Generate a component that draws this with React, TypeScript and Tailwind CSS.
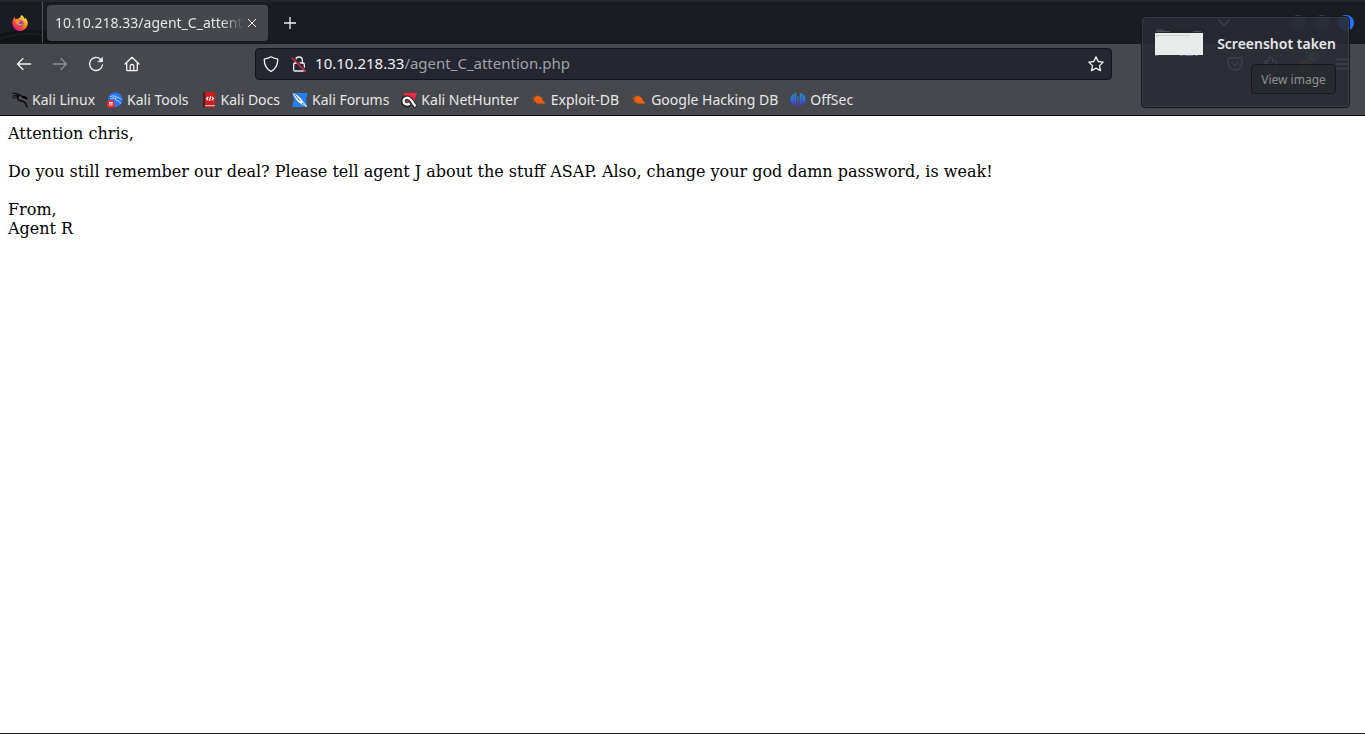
import type { ReactNode } from "react";

type IconProps = { className?: string };

function FirefoxIcon() {
  return (
    <svg viewBox="0 0 16 16" className="size-4" aria-hidden="true">
      <defs>
        <linearGradient id="fx-body" x1="0.85" y1="0.1" x2="0.2" y2="0.95">
          <stop offset="0" stopColor="#fff44f" />
          <stop offset="0.35" stopColor="#ff980e" />
          <stop offset="0.65" stopColor="#ff4a41" />
          <stop offset="1" stopColor="#e31587" />
        </linearGradient>
        <linearGradient id="fx-globe" x1="0.5" y1="0" x2="0.4" y2="1">
          <stop offset="0" stopColor="#b833e1" />
          <stop offset="1" stopColor="#5b4bd0" />
        </linearGradient>
      </defs>
      <path
        d="M9.6 0c1.8 1.3 2.6 2.7 2.9 3.9.4-.1.6-.6.6-1.1 1.8 1.5 2.7 3.5 2.7 5.6A7.7 7.7 0 0 1 8 16 7.7 7.7 0 0 1 .3 8.3C.3 6.5.9 5 1.5 4c.1-.8.4-1.5 1-2.2 0 .9.3 1.6.8 2.1.8-.2 1.500-.1 2.200.2.700-.8 1.500-1.100 2.300-1.200C8.300 1.900 8.900.8 9.600 0z"
        fill="url(#fx-body)"
      />
      <circle cx="8.2" cy="8.4" r="3.2" fill="url(#fx-globe)" />
      <path
        d="M3.4 5.2c1.2-.5 2.4-.3 3.4.6l1.700.1c.2.700-1.400 1.100-1.700 1.700-.1 1.200.9 1.800 2.100 1.500.9-.2 1.300-.5 2-.1-.6 1.300-1.800 1.900-3.200 1.700C5.300 10.400 4.100 8.300 3.400 5.200z"
        fill="#ff9a1f"
      />
    </svg>
  );
}

function Stroke({ className = "size-4", children }: { className?: string; children: ReactNode }) {
  return (
    <svg
      viewBox="0 0 16 16"
      className={className}
      fill="none"
      stroke="currentColor"
      strokeWidth="1.3"
      strokeLinecap="round"
      strokeLinejoin="round"
      aria-hidden="true"
    >
      {children}
    </svg>
  );
}

const BackIcon = () => (
  <Stroke>
    <path d="M14.7 8H1.500M7 2.500 1.500 8 7 13.500" />
  </Stroke>
);
const ForwardIcon = () => (
  <Stroke>
    <path d="M1.300 8h13.200M9 2.500 14.500 8 9 13.500" />
  </Stroke>
);
const ReloadIcon = () => (
  <Stroke>
    <path d="M14.500 9A6.500 6.500 0 1 1 12.700 3.400L14 5" />
    <path d="M14.500 1.500v4.300h-4.300z" fill="currentColor" strokeWidth="0.6" />
  </Stroke>
);
const HomeIcon = () => (
  <Stroke>
    <path d="M1 8 8 1.200 15 8M2.700 6.800v7.100c0 .4.300.7.700.7h9.200c.4 0 .7-.3.700-.7V6.800" />
    <path d="M6.200 14.500v-4.200a1.800 1.800 0 0 1 3.600 0v4.200" />
  </Stroke>
);
const ShieldIcon = () => (
  <Stroke>
    <path d="M8 .8c1.900 1.100 4 1.800 6.200 2.100.4.100.6.400.6.700-.1 4.300-1.700 9.100-6.300 11.500-.3.200-.7.200-1 0C2.900 12.700 1.300 7.900 1.200 3.600c0-.3.200-.6.600-.7C4 2.600 6.100 1.900 8 .8z" />
  </Stroke>
);
const LockIcon = () => (
  <Stroke>
    <path d="M4.600 7V4.400a3.400 3.400 0 0 1 6.800 0V7" />
    <path d="M3.900 7h8.200c.7 0 1.200.5 1.200 1.200v5.600c0 .7-.5 1.200-1.200 1.200H3.900c-.7 0-1.200-.5-1.200-1.200V8.200C2.700 7.500 3.200 7 3.900 7z" />
    <path d="M2.500 1.700 15.500 14.700" stroke="#242731" strokeWidth="1.5" />
    <path d="M1.500 2.500 14.500 15.500" stroke="#e2234a" strokeWidth="1.5" />
  </Stroke>
);
const StarIcon = () => (
  <Stroke>
    <path d="m8 .9 2.200 4.600 5 .6-3.700 3.500 1 5L8 12.100l-4.500 2.500 1-5L.8 6.100l5-.6z" />
  </Stroke>
);
const PocketIcon = () => (
  <Stroke>
    <path d="M2.200 2h11.600c.8 0 1.200.5 1.200 1.200V7A7 7 0 0 1 1 7V3.200C1 2.500 1.400 2 2.200 2z" />
    <path d="M4.800 6.300 8 9.300l3.200-3" />
  </Stroke>
);
const PuzzleIcon = () => (
  <Stroke>
    <path d="M2 14.800V10.500h1.500a1.700 1.700 0 0 0 0-3.400H2V5h3.500V3.300a2 2 0 0 1 4 0V5h4v9.800z" />
  </Stroke>
);
const MenuIcon = () => (
  <Stroke>
    <path d="M1.500 3.500h13M1.500 8h13M1.500 12.500h13" />
  </Stroke>
);

function KaliLinuxIcon({ className = "size-4 text-black" }: IconProps) {
  return (
    <svg viewBox="0 0 16 16" className={className} fill="none" stroke="currentColor" strokeLinecap="round" aria-hidden="true">
      <path d="M.7 1.300C3.500 1 7 1.900 9.700 4.200c1.800-.1 3.600.5 5 1.900" strokeWidth="1.1" />
      <path d="M.6 4.300c1.800-1 4-1.200 6.300-.5M1.500 6.300C3 5.200 4.800 4.700 6.300 4.800" strokeWidth="0.9" />
      <path d="M6.300 3.600C5 5.300 5.200 8.200 8 8.700c2.700.4 5 1 5.700 3 .3 1 .6 2.100 1.300 3" strokeWidth="1.3" />
      <path d="M9.700 4.200c1 1.800 3.400.9 5.200 2.700" strokeWidth="1.2" />
    </svg>
  );
}

const KaliToolsIcon = () => (
  <svg viewBox="0 0 16 16" className="size-4" aria-hidden="true">
    <circle cx="8.300" cy="7.700" r="7.200" fill="#2777ff" />
    <path
      d="M3.500 4.500c3-1.300 5.700-.4 7.500 1.300 1.300 0 2.300.5 3 1.500M3.800 6.700c1.700-.8 3.200-.9 4.700-.4M8.500 6c-.3 1.800.8 2.600 2.300 2.900 1.500.4 2.200 1.300 2.500 2.400"
      fill="none"
      stroke="#dceaff"
      strokeWidth="0.8"
      strokeLinecap="round"
    />
    <circle cx="3.900" cy="11.900" r="3.900" fill="#ee2b2b" />
    <path d="M1.900 10.700h4M2.900 10.700v3M4.900 10.700v3" stroke="#fff" strokeWidth="0.9" />
  </svg>
);

const KaliDocsIcon = () => (
  <svg viewBox="0 0 16 16" className="size-4" aria-hidden="true">
    <path d="M2 1.500C2 .7 2.500.3 3.200.3H14v13H2z" fill="#d9171b" />
    <path d="M2 1.500C2 .7 2.500.3 3.200.3h1v15.200H2z" fill="#3c232b" />
    <path d="M4 13.300h10v1.200H4z" fill="#eee4e4" />
    <path d="M3.300 14.500H14v1H3.300z" fill="#b80f15" />
    <path d="M7.200 4.900 5.500 6.600l1.700 1.700M10.900 4.900l1.700 1.700-1.700 1.700M9.600 4.200 8.500 9" fill="none" stroke="#fff" strokeWidth="1.2" />
  </svg>
);

const KaliForumsIcon = () => (
  <svg viewBox="0 0 16 16" className="size-4" aria-hidden="true">
    <path d="M.3 1H15.700L13.900 8l1.300 7H.3l1.500-7z" fill="#2381f6" />
    <path d="M.8 1.200C3.500 2 7 4 9.500 7.200l2.300 3.300 3.900 4.800-5.200-2.500-3.300-2C4.500 8.500 2.500 5.500.8 1.200z" fill="#f3f5f6" />
    <path d="M2.500 2.500 8 8.700M10 11l2.500 1.800" fill="none" stroke="#34404c" strokeWidth="0.900" />
  </svg>
);

const NetHunterIcon = () => (
  <svg viewBox="0 0 16 16" className="size-4" aria-hidden="true">
    <path d="M2 1H15.800L13.500 8.500l1.200 4.500L8 8z" fill="#f0283f" />
    <g fill="none" strokeLinecap="butt">
      <path d="M15 15.300 12 10.500C9.500 6.600 6.800 4.700 4.200 6c-3 1.500-2.600 6 .9 6.900 1.400.3 3-.1 4-1.100" stroke="#17191b" strokeWidth="4.200" />
      <path d="M14.500 14.500 11.500 10C9.200 6.500 6.600 5 4.300 6.300c-2.600 1.400-2.200 5.300 1 6.100 1.200.3 2.500-.1 3.400-.9" stroke="#fafafa" strokeWidth="2.400" />
      <path d="M4.500 9.600c1 .6 2.200.5 3-.1" stroke="#d92439" strokeWidth="1.600" />
    </g>
  </svg>
);

const ExploitIcon = () => (
  <svg viewBox="0 0 16 16" className="size-4" aria-hidden="true">
    <path
      d="M2.800 6.500C3.900 4.300 6 3.300 8 4.300c2 .4 3.300 2.300 4 4.200.6 1.200 1.500 1.800 2.700 2.400-1.300.5-2.500.7-3.700.5-2.500.6-5 .2-6.500-1.400C3.300 9 2.700 7.700 2.800 6.500z"
      fill="#f0600f"
    />
    <path
      d="M4.500 5.500 2.300 3.500M3.500 7.200.9 6.500M4.300 9.300 2 10.200M7.300 4.500 6.500 2.800M6.500 10.700l-.8 1.600M9 11l.5 1.300"
      stroke="#b9521e"
      strokeWidth="0.8"
      strokeLinecap="round"
    />
  </svg>
);

const OffSecIcon = () => (
  <svg viewBox="0 0 16 16" className="size-4" aria-hidden="true">
    <defs>
      <linearGradient id="offsec" x1="0" y1="0" x2="0" y2="1">
        <stop offset="0" stopColor="#12a0d2" />
        <stop offset="0.5" stopColor="#3869df" />
        <stop offset="1" stopColor="#5b1fd8" />
      </linearGradient>
    </defs>
    <path
      d="M7.500 4h1v11.500h-1zM6.200.8v13l-1.800-.8V1.400zM3.700 1.800v10.700C1.600 11.500.5 9.500.5 7.200s1.200-4.300 3.200-5.400zM9.800.8v13l1.800-.8V1.400zM12.300 1.800v10.700c2.100-1 3.200-3 3.200-5.300s-1.200-4.300-3.200-5.400z"
      fill="url(#offsec)"
    />
  </svg>
);

const bookmarks = [
  { label: "Kali Linux", Icon: KaliLinuxIcon },
  { label: "Kali Tools", Icon: KaliToolsIcon },
  { label: "Kali Docs", Icon: KaliDocsIcon },
  { label: "Kali Forums", Icon: KaliForumsIcon },
  { label: "Kali NetHunter", Icon: NetHunterIcon },
  { label: "Exploit-DB", Icon: ExploitIcon },
  { label: "Google Hacking DB", Icon: ExploitIcon },
  { label: "OffSec", Icon: OffSecIcon },
];

function TabStrip() {
  return (
    <header className="relative flex h-11 items-center overflow-hidden border-t-2 border-b border-t-[#23272e] border-b-[#15181c] bg-[#191c21]">
      <svg
        viewBox="0 0 150 44"
        className="pointer-events-none absolute bottom-0 left-0 h-11 w-[150px]"
        fill="none"
        aria-hidden="true"
      >
        <path d="M0 35C20 29 38 31 60 35S110 40 128 45H0z" fill="#111316" />
        <path d="M0 40C15 34 30 34 43 36" stroke="#22252a" />
      </svg>
      <div className="relative flex h-full w-[43px] shrink-0 items-center justify-center border-r border-[#50545a] pr-0.5">
        <FirefoxIcon />
      </div>
      <div className="relative ml-1 flex h-9 w-[221px] shrink-0 items-center rounded bg-[#45474c] px-2">
        <span className="min-w-0 flex-1 overflow-hidden whitespace-nowrap text-[#e4e5e7] [mask-image:linear-gradient(to_right,#000_88%,transparent)]">
          10.10.218.33/agent_C_attention.php
        </span>
        <button type="button" aria-label="Close tab" className="flex size-4 items-center justify-center">
          <svg viewBox="0 0 8 8" className="size-2" stroke="currentColor" aria-hidden="true">
            <path d="m0 0 8 8M8 0 0 8" />
          </svg>
        </button>
      </div>
      <button type="button" aria-label="New tab" className="ml-3 flex size-5 items-center justify-center">
        <svg viewBox="0 0 12 12" className="size-3" stroke="currentColor" strokeWidth="1.3" aria-hidden="true">
          <path d="M6 0v12M0 6h12" />
        </svg>
      </button>
      <div className="ml-auto flex items-center gap-2 pr-[11px]">
        <button type="button" aria-label="List all tabs" className="mr-[50px] flex size-4 items-center justify-center">
          <Stroke>
            <path d="m3 5.500 5 5 5-5" />
          </Stroke>
        </button>
        <button type="button" aria-label="Minimize" className="size-4 rounded-full bg-[#3a3e49]" />
        <button type="button" aria-label="Maximize" className="size-4 rounded-full bg-[#3a3e49]" />
        <button type="button" aria-label="Close window" className="size-4 rounded-full bg-[#2274ff]" />
      </div>
    </header>
  );
}

function AddressBar() {
  return (
    <div className="flex h-8 min-w-0 flex-[8] items-center rounded border border-[#111318] bg-[#242731] px-[7px]">
      <ShieldIcon />
      <span className="ml-3 flex">
        <LockIcon />
      </span>
      <div className="ml-2 min-w-0 flex-1 truncate text-[15px] text-[#a0a2a7]">
        <span className="text-[#f1f1f3]">10.10.218.33</span>/agent_C_attention.php
      </div>
      <button type="button" aria-label="Bookmark this page">
        <StarIcon />
      </button>
    </div>
  );
}

function Toolbar() {
  return (
    <nav aria-label="Navigation" className="flex h-10 items-center pr-3.5 pl-4">
      <div className="flex items-center gap-5 pr-2.5">
        <button type="button" aria-label="Back"><BackIcon /></button>
        <button type="button" aria-label="Forward" disabled className="text-[#8a8c90]"><ForwardIcon /></button>
        <button type="button" aria-label="Reload"><ReloadIcon /></button>
        <button type="button" aria-label="Home"><HomeIcon /></button>
      </div>
      <div className="flex-1" />
      <AddressBar />
      <div className="flex-1" />
      <div className="flex items-center gap-5 pl-2.5">
        <button type="button" aria-label="Save to Pocket"><PocketIcon /></button>
        <button type="button" aria-label="Extensions"><PuzzleIcon /></button>
        <button type="button" aria-label="Containers" className="relative">
          <svg viewBox="0 0 16 16" className="size-4" aria-hidden="true">
            <rect x="1" y="4" width="11" height="11" rx="1" fill="#e07b2d" />
            <circle cx="6.5" cy="9.5" r="2.5" fill="#3b3028" />
          </svg>
          <span className="absolute -top-1 left-1.5 rounded-xs bg-[#74777d] px-1 text-[9px] leading-[10px] text-white">C</span>
        </button>
        <button type="button" aria-label="Open menu"><MenuIcon /></button>
      </div>
    </nav>
  );
}

function BookmarksBar() {
  return (
    <nav aria-label="Bookmarks" className="flex h-[31px] items-center gap-3 pl-3 text-[#e6e7e8]">
      {bookmarks.map(({ label, Icon }) => (
        <a key={label} href="#" className="flex items-center gap-1 whitespace-nowrap">
          <Icon />
          {label}
        </a>
      ))}
    </nav>
  );
}

function Notification() {
  return (
    <aside
      role="status"
      className="absolute top-4 right-[15px] flex h-[92px] w-[209px] items-start rounded border border-[#15181e] bg-[#282b34]/90 px-[13px] pt-3 shadow-[inset_0_0_0_1px_rgba(255,255,255,0.08)]"
    >
      <svg viewBox="0 0 48 28" className="h-7 w-12 shrink-0" aria-hidden="true">
        <rect width="48" height="4" fill="#25272f" />
        <path d="M1 1h8M1 2.500h14M38 2.500h8" stroke="#555861" strokeWidth="0.8" />
        <rect y="4" width="48" height="22" fill="#e9eaea" />
        <path d="M1 5h2M1 6.500h34M1 8h2" stroke="#c3c5c7" strokeWidth="0.7" />
        <path d="M0 26.500h5M25 26.500h20" stroke="#626671" strokeDasharray="3 2" />
        <path d="M33 26.500h2" stroke="#2274ff" />
      </svg>
      <div className="flex flex-1 flex-col items-end">
        <strong className="mt-[5px] leading-5 font-semibold whitespace-nowrap text-[#e7e8e9]">Screenshot taken</strong>
        <button
          type="button"
          className="mt-2.5 h-[30px] w-[85px] rounded border border-[#15181c] bg-[#272a30]/80 pt-px text-xs whitespace-nowrap text-[#8c8e92]"
        >
          View image
        </button>
      </div>
    </aside>
  );
}

export default function App() {
  return (
    <div className="relative flex min-h-screen flex-col border-b border-[#17191d] bg-white font-['Noto_Sans',sans-serif] text-sm text-[#f0f0f1]">
      <TabStrip />
      <div className="border-b border-black bg-[#46484d]">
        <Toolbar />
        <BookmarksBar />
      </div>
      <main className="flex-1 p-2 font-['DejaVu_Serif',serif] text-base leading-[19px] text-black">
        <p>Attention chris,</p>
        <p className="mt-[19px]">
          Do you still remember our deal? Please tell agent J about the stuff ASAP. Also, change your god damn password,
          is weak!
        </p>
        <p className="mt-[19px]">
          From,
          <br />
          Agent R
        </p>
      </main>
      <Notification />
    </div>
  );
}
